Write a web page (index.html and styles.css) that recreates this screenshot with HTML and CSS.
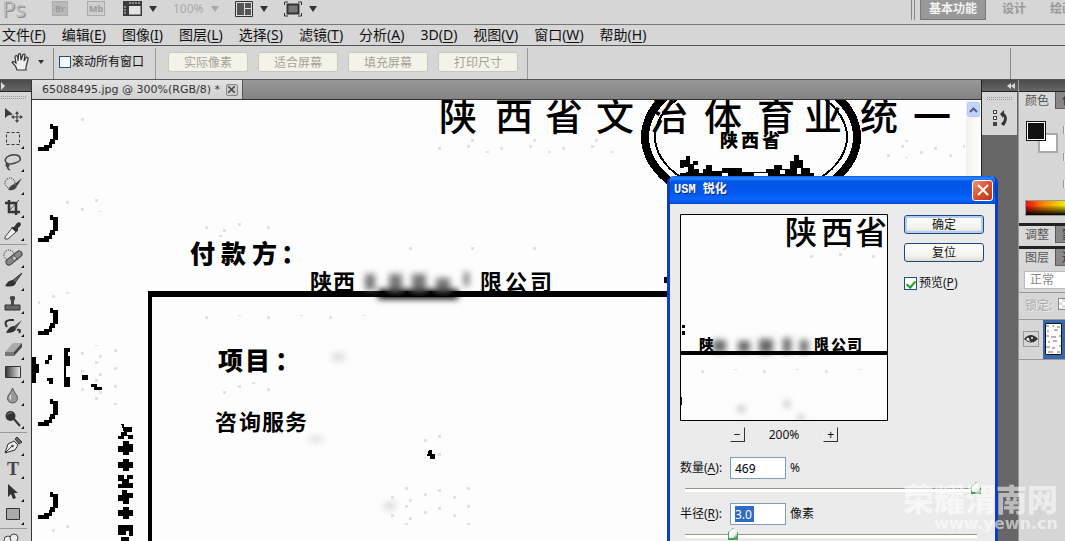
FILE: index.html
```html
<!DOCTYPE html>
<html lang="zh-CN">
<head>
<meta charset="utf-8">
<title>65088495.jpg @ 300%(RGB/8)</title>
<link rel="stylesheet" href="styles.css">
</head>
<body>
<div class="app">
  <header class="appbar">
    <span class="logo">Ps</span>
    <button class="chip">Br</button>
    <button class="chip chip-mb">Mb</button>
    <button class="view-btn"><svg width="19" height="16" viewBox="0 0 19 16"><path d="M0 0H19V15H0Z" fill="#3b3b3b"/><path d="M6 5H17.500V13.500H6Z" fill="#e4e4e4"/><path d="M7 1V3M10 1V3M13 1V3M16 1V3M1 6H3M1 9H3M1 12H3" stroke="#ddd"/></svg><i class="caret"></i></button>
    <button class="view-btn zoom-btn">100%<i class="caret caret-off"></i></button>
    <button class="view-btn"><svg width="18" height="16" viewBox="0 0 18 16"><path d="M.5 .5H17.500V15.500H.5Z" fill="#ddd" stroke="#333"/><path d="M2 2H9V14H2ZM10 2H16V7H10ZM10 8H16V14H10Z" fill="#555"/></svg><i class="caret"></i></button>
    <button class="view-btn"><svg width="18" height="16" viewBox="0 0 18 16"><path d="M.5 4V1H4M14 1H17.500V4M.5 12V15H4M14 15H17.500V12" fill="none" stroke="#333"/><path d="M3.500 3.500H14.500V12.500H3.500Z" fill="#777" stroke="#333" stroke-width="2"/></svg><i class="caret"></i></button>
    <nav class="workspaces">
      <button class="workspace active">基本功能</button>
      <button class="workspace">设计</button>
      <button class="workspace">绘画</button>
    </nav>
  </header>

  <nav class="menubar">
    <button>文件(<u>F</u>)</button>
    <button>编辑(<u>E</u>)</button>
    <button>图像(<u>I</u>)</button>
    <button>图层(<u>L</u>)</button>
    <button>选择(<u>S</u>)</button>
    <button>滤镜(<u>T</u>)</button>
    <button>分析(<u>A</u>)</button>
    <button>3D(<u>D</u>)</button>
    <button>视图(<u>V</u>)</button>
    <button>窗口(<u>W</u>)</button>
    <button>帮助(<u>H</u>)</button>
  </nav>

  <section class="options">
    <button class="current-tool" aria-label="抓手工具"><svg width="20" height="20" viewBox="0 0 20 20"><path d="M6 18L4.500 14L1 10.500Q2 8.500 5 11L4 5Q4 3.500 5.500 3.500Q7 4 7 9L7.500 2.500Q8 1 9.500 2L10 8L12 2.500Q13.500 1.500 14 3L13 9L15.500 5Q17.500 5 17 7L15 15V18Z" fill="#eee" stroke="#333" stroke-width="1.200"/></svg><i class="caret caret-small"></i></button>
    <label class="scroll-all"><input type="checkbox" class="tick">滚动所有窗口</label>
    <div class="view-actions">
      <button disabled>实际像素</button>
      <button disabled>适合屏幕</button>
      <button disabled>填充屏幕</button>
      <button disabled>打印尺寸</button>
    </div>
    <span class="options-end"></span>
  </section>

  <main class="work">
    <aside class="tools">
      <div class="dock-head tools-head"><svg width="6" height="8" viewBox="0 0 6 8"><path d="M1 0L5 4L1 8Z" fill="#ddd"/></svg></div>
      <div class="grip"></div>
      <button class="tool plain" aria-label="移动"><svg viewBox="0 0 24 23"><path d="M5 4V14L8 11.500L13 10.500Z" fill="#3a3a3a"/><path d="M17 8V18M12 13H22" stroke="#444" stroke-width="1.200"/><path d="M15 10L17 7L19 10ZM15 16L17 19L19 16ZM14 11L11 13L14 15ZM20 11L23 13L20 15Z" fill="#444"/></svg></button>
      <button class="tool" aria-label="选框"><svg viewBox="0 0 24 23"><path d="M6.500 5.500H19.500V17.500H6.500Z" fill="none" stroke="#333" stroke-dasharray="3 2"/></svg></button>
      <button class="tool" aria-label="套索"><svg viewBox="0 0 24 23"><path d="M8 14Q3 11 7 7Q13 3 19 6Q23 11 15 13Q10 15 7 13Q5 16 8 17Q10 15 7 14Q7 19 10 20" fill="none" stroke="#444" stroke-width="1.500"/></svg></button>
      <button class="tool" aria-label="快速选择"><svg viewBox="0 0 24 23"><circle cx="10" cy="10" r="5" fill="none" stroke="#222" stroke-dasharray="1 1"/><path d="M22 5L15 11L17 13Z" fill="#333"/><path d="M15 11Q11 11 8 17Q16 18 17 13Z" fill="#444"/></svg></button>
      <button class="tool" aria-label="裁剪"><svg viewBox="0 0 24 23"><path d="M9 4V16H20M5 7H16V19" fill="none" stroke="#333" stroke-width="2.500"/><path d="M9 15L19 4" stroke="#444"/></svg></button>
      <button class="tool" aria-label="吸管"><svg viewBox="0 0 24 23"><path d="M12 9L16 13L8 20H5V18Z" fill="#eee" stroke="#444"/><path d="M11 8L14 8L17 4Q20 2 21 5Q21 7 18 9L18 12L16 13Z" fill="#333"/></svg></button>
      <div class="tool-rule"></div>
      <button class="tool" aria-label="修复画笔"><svg viewBox="0 0 24 23"><circle cx="9" cy="9" r="5" fill="none" stroke="#222" stroke-dasharray="1 1"/><path d="M9 16L19 8" stroke="#444" stroke-width="7" stroke-linecap="round"/><path d="M9 16L19 8" stroke="#888" stroke-width="5" stroke-linecap="round"/><path d="M11 11L15 16M14 9L18 14" stroke="#555"/><path d="M13 12H16M14 11V14" stroke="#ddd"/></svg></button>
      <button class="tool" aria-label="画笔"><svg viewBox="0 0 24 23"><path d="M22 4L12 12L15 14Z" fill="#666" stroke="#333"/><path d="M13 11Q8 11 5 17Q14 19 16 14Z" fill="#333"/></svg></button>
      <button class="tool" aria-label="图章"><svg viewBox="0 0 24 23"><path d="M5 13H20V18H5Z" fill="#666" stroke="#333"/><path d="M11 13V9Q8 4 12.500 4Q17 4 14 9V13Z" fill="#444"/></svg></button>
      <button class="tool" aria-label="历史画笔"><svg viewBox="0 0 24 23"><path d="M22 5L13 12L16 14Z" fill="#555"/><path d="M14 11Q9 11 6 18Q15 18 16 14Z" fill="#333"/><path d="M7 12Q3 6 10 5H14M17 15Q22 14 19 18" fill="none" stroke="#333" stroke-width="2"/></svg></button>
      <button class="tool" aria-label="橡皮擦"><svg viewBox="0 0 24 23"><path d="M5 14L13 5H22L14 14Z" fill="#aaa"/><path d="M5 14H14V18H5Z" fill="#777"/><path d="M14 14L22 5V9L14 18Z" fill="#444"/></svg></button>
      <button class="tool" aria-label="渐变"><svg viewBox="0 0 24 23"><defs><linearGradient id="ramp"><stop stop-color="#333"/><stop offset="1" stop-color="#eee"/></linearGradient></defs><path d="M5.500 5.500H20.500V16.500H5.500Z" fill="url(#ramp)" stroke="#333"/></svg></button>
      <button class="tool" aria-label="模糊"><svg viewBox="0 0 24 23"><path d="M12.500 4Q14 8 17 12Q19 18 12.500 19Q6 18 8 12Q11 8 12.500 4Z" fill="#999" stroke="#555"/><path d="M11 10Q8 14 11 16Z" fill="#e8e8e8"/></svg></button>
      <button class="tool" aria-label="减淡"><svg viewBox="0 0 24 23"><circle cx="10.500" cy="9" r="5" fill="#333"/><path d="M14 12L20 19" stroke="#333" stroke-width="2"/><path d="M7 8Q9 5 12 6" stroke="#888" fill="none"/></svg></button>
      <div class="tool-rule"></div>
      <button class="tool" aria-label="钢笔"><svg viewBox="0 0 24 23"><path d="M5 19L8 10L14 7L18 11L15 16Z" fill="#eee" stroke="#333"/><path d="M15 5L17 3L22 8L19 10Z" fill="#666" stroke="#333"/><path d="M5 19L12 12" stroke="#333"/><circle cx="12.500" cy="12" r="1.200" fill="#333"/></svg></button>
      <button class="tool type-tool" aria-label="文字">T</button>
      <button class="tool" aria-label="路径选择"><svg viewBox="0 0 24 23"><path d="M8 4V17L11 14L13 19L16 18L14 13H18Z" fill="#333"/></svg></button>
      <button class="tool" aria-label="矩形"><svg viewBox="0 0 24 23"><path d="M6.500 5.500H19.500V16.500H6.500Z" fill="#aaa" stroke="#333"/></svg></button>
      <div class="tool-rule"></div>
      <button class="tool" aria-label="三维"><svg viewBox="0 0 24 23"><circle cx="8" cy="10" r="4" fill="#eee" stroke="#444"/><circle cx="14" cy="8" r="4" fill="#eee" stroke="#444"/></svg></button>
    </aside>

    <section class="document">
      <div class="tabs"><div class="tab">65088495.jpg @ 300%(RGB/8) *<button class="tab-close" aria-label="关闭"><svg width="7" height="7" viewBox="0 0 7 7"><path d="M0 0L7 7M7 0L0 7" stroke="#444" stroke-width="1.500"/></svg></button></div></div>
      <div class="viewport">
        <svg class="artwork" width="934" height="441" viewBox="32 100 934 441">
          <defs>
            <filter id="soft" x="-20%" y="-60%" width="140%" height="220%"><feGaussianBlur stdDeviation="3"/></filter>
            <pattern id="grain" width="62" height="18" patternUnits="userSpaceOnUse"><path d="M4 3h3v3h-3zM19 10h3v3h-3zM33 1h3v3h-3zM37 13h3v3h-3zM52 7h3v3h-3z" fill="#e2e2e2"/></pattern>
            <path id="hook" d="M50 -2H53V0H58V14H55V18H52V22H49V25H38V21H44V19H49V16H50V13H53V3H50Z"/>
          </defs>
          <g class="grain">
            <rect x="427" y="139" width="190" height="14"/><rect x="190" y="222" width="90" height="15"/><rect x="62" y="198" width="40" height="14"/><rect x="73" y="108" width="20" height="14"/>
            <rect x="210" y="382" width="70" height="14"/><rect x="400" y="247" width="190" height="5"/><rect x="180" y="315" width="200" height="4"/><rect x="880" y="140" width="85" height="18"/>
            <rect x="38" y="292" width="40" height="14"/><rect x="40" y="518" width="34" height="16"/><rect x="415" y="432" width="34" height="26"/><rect x="380" y="485" width="90" height="40"/><rect x="80" y="345" width="40" height="60"/>
          </g>
          <g class="ink">
            <use href="#hook" y="126"/><use href="#hook" y="217"/><use href="#hook" y="310"/><use href="#hook" y="401"/><use href="#hook" y="494"/>
            <path d="M32 357H36V364H39V373H36V383H32ZM48 355H52V360H48ZM45 360H49V364H45ZM47 378H53V384H49V381H47ZM64 348H70V352H68V356H70V366H66V377H70V387H64ZM82 375H88V380H82ZM91 384H97V387H102V390H94V387H91Z"/>
            <path d="M148 294V291H668V297H152V541H148Z"/>
            <path d="M121 424h3v3h8v5h-5v3h6v4h-5v-3h-4v3h-6v-3h3v-4h3zM123 441h6v3h4v8h-4v3h-6v-3h-5v-6h5zM123 459h6v3h4v6h-4v3h-6v-3h-5v-6h5zM118 475h6v4h3v-4h6v4h-4v4h4v5h-15v-4h4v-3h-4zM122 490h5v3h6v5h-4v6h-6v-3h-5v-6h4zM123 507h6v3h4v6h-4v3h-6v-3h-5v-6h5zM118 525h15v11h-4v-5h-3v4h-8zM121 537h8v4h-8z"/>
            <text class="headline" y="130" x="439 495 545 596 650 704 757 804 860 913">陕西省文治体育业统一</text>
            <ellipse cx="751" cy="137" rx="106" ry="69" fill="none" stroke="#000" stroke-width="8"/>
            <ellipse cx="751" cy="137" rx="96" ry="59" fill="none" stroke="#000" stroke-width="2"/>
            <text class="field-small" y="147" x="720 741 762">陕西省</text>
            <path d="M680 160h6v-4h4v5h8v4h-4v4h12v-4h6v6h10v-3h20v4h24v-3h8v-4h8v4h8v-8h4v-6h5v5h4v8h7v5h4v7H680v-7h6v-5h-6z"/>
            <path d="M690 160h3v4h-3zM684 167h4v5h-4zM699 169h4v4h-4zM722 173h6v3h-6zM754 173h14v3h-14zM780 170h5v4h-5zM797 168h4v6h-4zM812 160h4v4h-4z" fill="#fff"/>
            <text class="field-large" y="263" x="190 221 252 281">付款方：</text>
            <text class="field-medium" y="290" x="310 333">陕西</text>
            <text class="field-medium" y="290" x="480 505 530">限公司</text>
            <text class="field-large" y="370" x="218 245 275">项目：</text>
            <text class="field-medium" y="430" x="215 239 262 285">咨询服务</text>
            <path d="M429 450h3v4h3v5h-5v-3h-3z"/><path d="M664 277h4v6h-4z"/>
          </g>
          <g filter="url(#soft)"><path d="M365 274h10v16h-10zM389 274h13v16h-13zM412 274h14v16h-14zM436 278h14v18h-14zM464 272h5v14h-5z" fill="#777"/><path d="M378 289H458V299H378Z"/><path d="M332 353h13v8h-13zM384 502h12v8h-12zM310 436h12v6h-12z" fill="#ddd"/></g>
        </svg>
        <div class="scrollbar"><button aria-label="向上滚动"><svg width="9" height="6" viewBox="0 0 9 6"><path d="M1 5L4.500 1.500L8 5" fill="none" stroke="#4d6185" stroke-width="2"/></svg></button></div>
      </div>
    </section>

    <aside class="icon-dock">
      <div class="dock-head"><svg width="8" height="6" viewBox="0 0 8 6"><path d="M4 0V6L0 3ZM8 0V6L4 3Z" fill="#ddd"/></svg></div>
      <div class="icon-panel"><div class="grip"></div><button aria-label="历史记录"><svg width="17" height="18" viewBox="0 0 17 18"><path d="M1.500 1.500h3v3h-3zM1.500 7.500h3v3h-3z" fill="#fff" stroke="#333"/><path d="M1 13h4v4h-4z" fill="#444"/><path d="M8 5L12 1V4Q18 8 12 17L9 15Q14 10 11 7V9Z" fill="#333"/></svg></button></div>
    </aside>

    <aside class="panels">
      <div class="dock-head"></div>
      <section class="panel color-panel">
        <div class="panel-tabs"><button class="on">颜色</button><button>色板</button></div>
        <div class="color-body"><div class="swatches"><span class="swatch-back"></span><span class="swatch-front"></span></div><div class="knobs"><i></i><i></i><i></i></div></div>
        <div class="spectrum"></div>
      </section>
      <section class="panel"><div class="panel-tabs"><button class="on">调整</button><button>蒙版</button></div></section>
      <section class="panel layers">
        <div class="panel-tabs"><button class="on">图层</button><button>通道</button></div>
        <div class="blend"><select aria-label="混合模式" disabled><option>正常</option></select></div>
        <div class="lock">锁定:<i class="checker"></i></div>
        <div class="layer"><button class="eye" aria-label="显示图层"><svg width="14" height="10" viewBox="0 0 14 10"><path d="M0 5Q7 -3 14 5Q7 12 0 5Z" fill="#333"/><path d="M2 5Q4 3 5 4Q5 7 7 8Q4 8 2 5Z" fill="#eee"/><circle cx="8" cy="4" r="1" fill="#fff"/></svg></button><div class="layer-thumb"><svg width="17" height="32" viewBox="0 0 17 32"><path d="M0 0H17V32H0Z" fill="#fff"/><path d="M1 3h3m3 0h2m3 1h3M2 8h2m5-1h4M1 13h3m2 1h5m3-1h2M3 19h2m3-1h4M1 24h4m2 1h3m4-2h2M3 29h5m4 0h3" stroke="#667"/><path d="M.5 .5H16.500V31.500H.5Z" fill="none" stroke="#111"/></svg></div></div>
      </section>
    </aside>
  </main>

  <section class="dialog" role="dialog" aria-labelledby="dialog-title">
    <header><h1 id="dialog-title">USM 锐化</h1><button class="close" aria-label="关闭"><svg width="12" height="12" viewBox="0 0 12 12"><path d="M1 1L11 11M11 1L1 11" stroke="#fff" stroke-width="2"/></svg></button></header>
    <div class="dialog-body">
      <div class="dialog-top">
        <div class="preview-side">
          <svg class="preview" width="208" height="207" viewBox="680 214 208 207">
            <path d="M680 214H888V421H680Z" fill="#fdfdfd"/>
            <g class="grain"><rect x="790" y="248" width="96" height="10"/><rect x="690" y="369" width="190" height="4"/></g>
            <text class="preview-title" y="244" x="785 821 855">陕西省</text>
            <text class="preview-text" y="350" x="699">陕</text>
            <text class="preview-text" y="350" x="814 831 847">限公司</text>
            <g filter="url(#soft)"><path d="M713 340h13v12h-13zM738 341h12v11h-12zM759 339h14v14h-14zM783 338h8v15h-8zM800 340h8v13h-8z" fill="#666"/><path d="M784 401h6v6h-6zM738 406h7v6h-7zM798 415h6v5h-6z" fill="#bbb"/></g>
            <path d="M680 351H888V355H680ZM682 325h3v3h-3zM682 331h3v4h-3zM680 397h2v8h-2z"/>
            <path d="M680.500 214.500H887.500V420.500H680.500Z" fill="none" stroke="#000"/>
          </svg>
          <div class="zoom-row"><button>−</button><output>200%</output><button>+</button></div>
        </div>
        <div class="actions"><button class="push default">确定</button><button class="push">复位</button><label class="preview-check"><input type="checkbox" class="tick" checked>预览(<u>P</u>)</label></div>
      </div>
      <div class="field"><label for="amount">数量(<u>A</u>):</label><input id="amount" type="text" value="469"><span>%</span></div>
      <input class="slider" type="range" min="1" max="500" value="500" aria-label="数量">
      <div class="field"><label for="radius">半径(<u>R</u>):</label><input id="radius" class="selected" type="text" value="3.0"><span>像素</span></div>
      <input class="slider" type="range" min="0" max="100" value="15" aria-label="半径">
    </div>
  </section>

  <div class="watermark"><span class="mark-name">荣耀渭南网</span><span class="mark-url">www.yewn.cn</span></div>
</div>
</body>
</html>
```

FILE: styles.css
```css
* { box-sizing: border-box; }
body { margin: 0; font: 12px/16px "Noto Sans", "Noto Sans CJK SC", sans-serif; color: #111; }
button { margin: 0; padding: 0; border: 0; background: none; font: inherit; color: inherit; }
svg { display: block; flex: none; }
.app { position: relative; display: flex; flex-direction: column; height: 100vh; overflow: hidden; background: #d6d6d6; }

.appbar { display: flex; flex: none; align-items: flex-start; height: 25px; overflow: hidden; border-bottom: 1px solid #777; white-space: nowrap; }
.logo { width: 52px; padding-left: 2px; font-size: 22px; line-height: 16px; color: #bbb; text-shadow: 1px 1px #888; }
.chip { width: 16px; height: 15px; margin: 1px 19px 0 0; background: #b9b9b9; border: 1px solid #aaa; color: #999; font-size: 9px; line-height: 12px; font-weight: bold; }
.chip-mb { width: 18px; margin-right: 18px; background: #cfcfcf; }
.view-btn { display: flex; align-items: center; gap: 7px; height: 17px; margin-right: 16px; }
.zoom-btn { color: #aaa; }
.caret { border: 4px solid transparent; border-top: 6px solid #333; border-bottom: 0; width: 0; }
.caret-off { border-top-color: #aaa; }
.caret-small { border-width: 3px; border-top-width: 4px; border-bottom: 0; }
.workspaces { display: flex; flex: none; width: 154px; margin-left: auto; padding-left: 5px; border-left: 4px double #888; gap: 16px; }
.workspace { flex: none; height: 20px; font-weight: bold; color: #999; padding: 0 0 2px; }
.workspace:last-child { margin-left: 8px; }
.active { width: 66px; background: #999; border: 1px solid #777; border-top: 0; color: #f4f4f4; }

.menubar { display: flex; flex: none; gap: 16px; height: 21px; padding-left: 2px; border-bottom: 1px solid #555; font-size: 14px; line-height: 18px; white-space: nowrap; }
u { text-underline-offset: 2px; }

.options { display: flex; flex: none; align-items: stretch; height: 34px; padding-top: 2px; border-bottom: 1px solid #555; white-space: nowrap; }
.current-tool { display: flex; align-items: center; gap: 7px; width: 54px; padding: 0 0 4px 11px; border-right: 1px solid #888; }
.scroll-all { display: flex; align-items: center; width: 102px; padding: 0 0 3px 5px; border-right: 1px solid #999; }
.tick { appearance: none; flex: none; width: 12px; height: 12px; margin: 0 1px 0 0; border: 1px solid #1c5180; background: #f5f8f8; }
.tick:checked { position: relative; width: 13px; height: 13px; background: #fff; }
.tick:checked::after { content: ""; position: absolute; left: 3px; top: 1px; width: 4px; height: 7px; border: solid #21a121; border-width: 0 2px 2px 0; transform: rotate(40deg); }
.view-actions { display: flex; gap: 10px; padding: 4px 9px 0 12px; border-right: 1px solid #999; }
.view-actions button { width: 80px; height: 20px; border: 1px solid #c9c9bb; border-radius: 3px; background: #f3f3ea; color: #a3a397; line-height: 17px; }
.options-end { margin: 0 54px 0 auto; border-left: 1px solid #888; }

.work { display: flex; flex: 1; min-height: 0; }
.tools { display: flex; flex: none; flex-direction: column; width: 32px; overflow: hidden; border-right: 1px solid #333; }
.dock-head { display: flex; flex: none; align-items: center; justify-content: flex-end; height: 12px; padding-right: 3px; background: linear-gradient(#4a4a4a, #666); border-bottom: 1px solid #222; }
.tools-head { justify-content: flex-start; }
.grip { flex: none; height: 4px; margin: 4px; background: conic-gradient(#999 0 25%, transparent 0) 0 0 / 2px 2px; }
.tools .grip { margin-left: 0; }
.tool { position: relative; flex: none; height: 23px; width: 24px; }
.tool svg { width: 24px; height: 23px; }
.tool::after { content: ""; position: absolute; right: 0; bottom: 1px; border: solid transparent; border-width: 0 0 3px 3px; border-bottom-color: #111; }
.plain::after { display: none; }
.type-tool { padding-left: 2px; font: bold 18px/22px "Liberation Serif", serif; color: #444; }
.tool-rule { flex: none; height: 4px; width: 27px; background: linear-gradient(#999, #999) 0 2px / 100% 1px no-repeat; }

.document { display: flex; flex: 1; flex-direction: column; min-width: 0; }
.tabs { display: flex; flex: none; height: 20px; background: linear-gradient(#999, #828282); border-bottom: 1px solid #333; }
.tab { display: flex; align-items: center; gap: 6px; padding: 0 4px 0 10px; background: linear-gradient(#e2e2e2, #d0d0d0); border-right: 1px solid #555; font: 11px/18px "DejaVu Sans", sans-serif; white-space: nowrap; color: #333; }
.tab-close { display: grid; place-items: center; width: 12px; height: 12px; border: 1px solid #888; border-radius: 2px; background: #ccc; }
.viewport { display: flex; flex: 1; min-height: 0; overflow: hidden; background: #fdfdfd; }
.artwork { flex: 1 0 auto; }
.artwork text, .preview text { font-family: "Noto Sans CJK SC", sans-serif; fill: #000; }
.grain rect { fill: url(#grain); }
.ink { shape-rendering: crispEdges; }
.headline { font-size: 38px; font-weight: 500; }
.field-large { font-size: 25px; font-weight: 900; }
.field-medium { font-size: 22px; font-weight: 700; }
.field-small { font-size: 18px; font-weight: 900; }
.scrollbar { flex: none; width: 15px; padding-top: 2px; background: linear-gradient(90deg, #f3f1ec, #fefefb); }
.scrollbar button { display: grid; place-items: center; width: 13px; height: 15px; margin: 0 1px; background: #c3d3fd; border: 1px solid #b5c8f0; border-radius: 2px; }

.icon-dock { flex: none; width: 37px; background: #666; border-left: 1px solid #222; }
.icon-panel { height: 43px; margin-right: 1px; padding-top: 1px; background: #d6d6d6; }
.icon-panel button { padding: 4px 0 0 10px; }
.panels { flex: none; width: 47px; overflow: hidden; border-left: 1px solid #999; }
.panel { border-bottom: 3px solid #222; background: #d6d6d6; }
.layers { border-bottom: 0; }
.panel-tabs { display: flex; height: 17px; background: #777; white-space: nowrap; line-height: 15px; color: #333; }
.panel-tabs button { flex: none; padding: 0 6px; border-left: 1px solid #555; border-bottom: 1px solid #666; background: #888; }
.panel-tabs .on { width: 36px; border: 0; background: #d9d9d9; color: #555; }
.color-panel { height: 134px; }
.panel:nth-of-type(2) { height: 23px; }
.color-body { display: flex; justify-content: space-between; height: 91px; padding: 12px 0 0 7px; }
.swatches { display: grid; width: 32px; height: 32px; }
.swatch-back, .swatch-front { grid-area: 1 / 1; width: 20px; height: 20px; border: 2px solid #aaa; background: #fff; }
.swatch-back { place-self: end; }
.swatch-front { border: 1px solid #111; background: #111; outline: 1px solid #fff; outline-offset: -2px; }
.knobs { display: grid; align-content: start; gap: 19px; padding-top: 5px; }
.knobs i { width: 2px; height: 8px; background: #eee; border-left: 1px solid #999; }
.spectrum { height: 16px; margin-left: 6px; border: 1px solid #999; border-right: 0; background: linear-gradient(transparent 30%, #000), linear-gradient(90deg, #e11, #f80 45%, #ee0); }
.blend { padding: 5px 0 3px 5px; border-bottom: 1px solid #999; }
.blend select { appearance: none; width: 60px; height: 18px; padding: 0 5px; border: 1px solid #bbb; border-radius: 0; background: #fff; color: #888; opacity: 1; font: inherit; }
.lock { display: flex; gap: 6px; height: 27px; padding: 5px 6px; border-bottom: 1px solid #999; color: #aaa; text-shadow: 1px 1px #eee; white-space: nowrap; }
.checker { flex: none; width: 12px; height: 12px; border: 1px solid #888; background: conic-gradient(#ddd 25%, #fff 0 50%, #ddd 0 75%, #fff 0) 0 0 / 6px 6px; }
.layer { display: flex; height: 40px; border-bottom: 1px solid #999; }
.eye { display: grid; place-items: center; flex: none; width: 16px; height: 16px; margin: 11px 4px; border: 1px solid #999; }
.layer-thumb { flex: 1; padding: 3px 2px; background: #3a66ab; }

.dialog { position: absolute; left: 667px; top: 176px; width: 331px; height: 380px; border: 3px solid #0a3fc4; border-top: 0; border-radius: 7px 7px 0 0; background: #ebebeb; overflow: hidden; }
.dialog header { display: flex; align-items: center; justify-content: space-between; height: 28px; padding: 0 2px 0 4px; background: linear-gradient(#0a5be8, #2b86ff 8%, #0454e4 20%, #0358ee 60%, #0a66ff 85%, #0347cc); }
.dialog h1 { margin: 0; font: bold 12px/16px "Liberation Mono", "Noto Sans CJK SC", monospace; color: #fff; text-shadow: 1px 1px #0a2c80; }
.close { display: grid; place-items: center; width: 21px; height: 21px; border: 1px solid #fff; border-radius: 3px; background: linear-gradient(135deg, #e8977d, #d9502b 50%, #b93a18); }
.dialog-body { padding: 10px 10px 0; }
.dialog-top { display: flex; gap: 16px; }
.preview-title { font-size: 32px; font-weight: 500; }
.preview-text { font-size: 15px; font-weight: 900; }
.zoom-row { display: flex; align-items: center; justify-content: center; gap: 24px; height: 27px; }
.zoom-row button { width: 15px; height: 15px; border: 1px solid #eee; border-right-color: #333; border-bottom-color: #333; line-height: 11px; }
.actions { display: flex; flex-direction: column; gap: 9px; width: 80px; padding-top: 1px; }
.push { height: 19px; border: 1px solid #1c4a7c; border-radius: 3px; background: linear-gradient(#fff, #f3f2ec 70%, #dedbd0); line-height: 16px; }
.default { box-shadow: inset 0 0 0 2px #b5cdf5; }
.preview-check { display: flex; align-items: center; padding-top: 4px; white-space: nowrap; }
.preview-check .tick { margin-right: 2px; }
.field { display: flex; align-items: center; height: 22px; margin-top: 9px; }
.slider + .field { margin-top: 8px; }
.field label { width: 50px; white-space: nowrap; }
.field input { width: 56px; height: 22px; margin-right: 4px; padding: 0 4px; border: 1px solid #7f9db9; background: #fff; font: inherit; }
.field .selected { color: #fff; background: #fff linear-gradient(#316ac5, #316ac5) 4px 2px / 19px 16px no-repeat; }
.slider { appearance: none; display: block; width: 296px; height: 14px; margin: 2px 0 0 5px; background: linear-gradient(#999888, #999888) 0 7px / 292px 1px no-repeat, linear-gradient(#fff, #fff) 0 8px / 292px 3px no-repeat; }
.slider::-webkit-slider-thumb { appearance: none; width: 10px; height: 12px; background: linear-gradient(135deg, #9c9 10%, #fff 30%, #e4eee4 70%, #3a9c4a 95%); border: 1px solid #4a9c58; border-bottom-width: 2px; clip-path: polygon(0 35%, 50% 0, 100% 35%, 100% 100%, 0 100%); }

.watermark { position: absolute; right: 7px; bottom: 8px; display: flex; flex-direction: column; align-items: flex-end; color: #fff; opacity: 0.550; pointer-events: none; }
.mark-name { font: 900 31px/34px "Noto Sans CJK SC", sans-serif; }
.mark-url { font: bold 16px/18px "DejaVu Sans", sans-serif; }
```
